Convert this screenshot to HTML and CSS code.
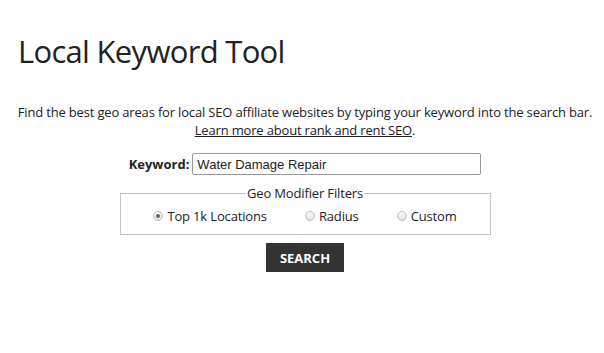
FILE: index.html
```html
<!DOCTYPE html>
<html>
<head>
<meta charset="utf-8">
<link rel="stylesheet" href="styles.css">
</head>
<body>
<div class="page">
  <h1 class="title">Local Keyword Tool</h1>
  <p class="intro">Find the best geo areas for local SEO affiliate websites by typing your keyword into the search bar.<br><a href="#" class="link">Learn more about rank and rent SEO</a>.</p>
  <form class="form">
    <div class="kw-row">
      <label class="kw-label" for="kw">Keyword:</label>
      <input class="kw-input" id="kw" type="text" value="Water Damage Repair">
    </div>
    <fieldset class="filters">
      <legend class="legend">Geo Modifier Filters</legend>
      <label class="opt"><span class="radio checked"></span>Top 1k Locations</label>
      <label class="opt"><span class="radio"></span>Radius</label>
      <label class="opt"><span class="radio"></span>Custom</label>
    </fieldset>
    <button type="button" class="search">SEARCH</button>
  </form>
</div>
</body>
</html>
```
FILE: styles.css
```css
html, body {
  margin: 0;
  padding: 0;
  background: #fff;
}
body {
  font-family: "Open Sans", "Liberation Sans", sans-serif;
  color: #222;
}
.page {
  padding: 0 12px 0 18px;
}
.title {
  margin: 0;
  padding-top: 29px;
  font-size: 31px;
  letter-spacing: -0.7px;
  font-weight: 400;
  line-height: 44px;
  color: #222;
}
.intro {
  margin: 30px -10px 0;
  text-align: center;
  font-size: 13px;
  letter-spacing: -0.17px;
  line-height: 18px;
  color: #222;
}
.link {
  color: #222;
  text-decoration: underline;
}
.form {
  display: flex;
  flex-direction: column;
  align-items: center;
}
.kw-row {
  display: flex;
  align-items: center;
  margin-top: 14px;
}
.kw-label {
  font-weight: 700;
  font-size: 13px;
  margin-right: 3px;
}
.kw-input {
  width: 289px;
  height: 22px;
  box-sizing: border-box;
  border: 1px solid #999;
  border-radius: 2px;
  padding: 0 4px;
  font-family: "Liberation Sans", Arial, sans-serif;
  font-size: 13px;
  color: #222;
}
.filters {
  margin: 9px 0 0 0;
  width: 371px;
  box-sizing: border-box;
  border: 1px solid #c4c4c4;
  padding: 5px 0 9px;
  display: flex;
  justify-content: center;
  gap: 38px;
  font-size: 13px;
  letter-spacing: -0.15px;
}
.legend {
  padding: 0 1px;
  margin: 0 auto;
  font-size: 13px;
  color: #222;
}
.opt {
  display: flex;
  align-items: center;
}
.radio {
  width: 10px;
  height: 10px;
  border-radius: 50%;
  border: 1px solid #bbb;
  background: linear-gradient(#fafafa, #e2e2e2);
  margin-right: 4px;
  box-sizing: border-box;
  position: relative;
}
.radio.checked::after {
  content: "";
  position: absolute;
  left: 2px;
  top: 2px;
  width: 4px;
  height: 4px;
  border-radius: 50%;
  background: #666;
}
.search {
  margin-top: 8px;
  width: 78px;
  height: 29px;
  border: 0;
  background: #333;
  color: #fff;
  font-family: "Open Sans", sans-serif;
  font-weight: 700;
  font-size: 13px;
  padding: 0;
}
```
